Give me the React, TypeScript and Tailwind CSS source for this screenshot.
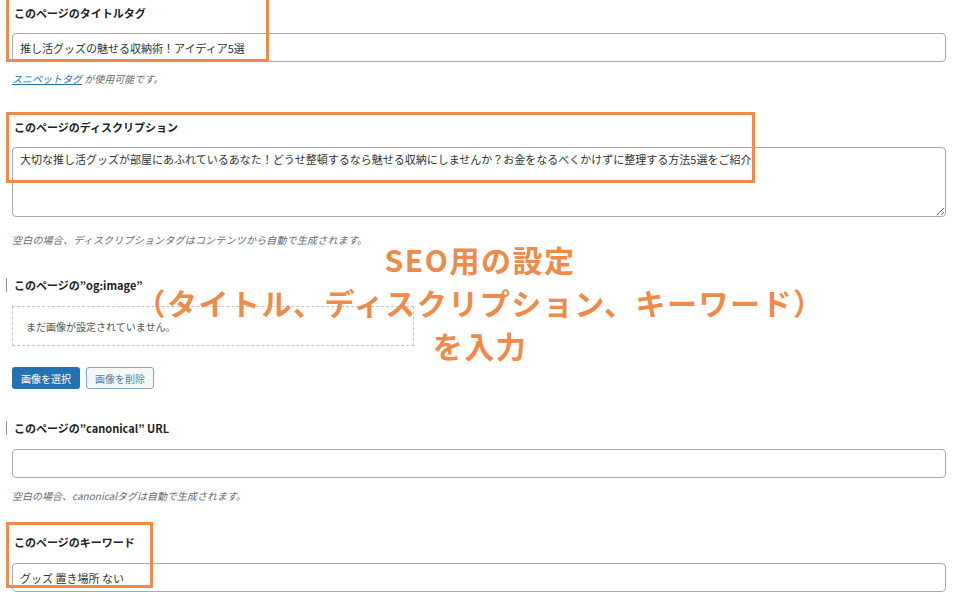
import React from "react";

const labelCls = "pl-[2px] text-[11px] leading-[14px] font-bold text-[#1d2327]";
const inputCls =
  "block w-full h-[29px] rounded-[4px] border border-[#a7aaad] bg-white px-[7px] text-[11px] text-[#2c3338] outline-none";
const helpCls = "text-[10px] leading-[14px] italic text-[#646970]";

const App: React.FC = () => {
  return (
    <div
      className="relative w-[960px] h-[594px] overflow-hidden bg-white"
      style={{ fontFamily: '"Noto Sans CJK JP", "Noto Sans", sans-serif' }}
    >
      <div className="flex flex-col pl-[12px] pr-[14px] pt-[6px]">
        {/* title tag */}
        <div className={labelCls}>このページのタイトルタグ</div>
        <input readOnly value="推し活グッズの魅せる収納術！アイディア5選" className={`${inputCls} mt-[13px]`} />
        <p className={`${helpCls} mt-[10px]`}>
          <span className="text-[#2271b1] underline">スニペットタグ</span> が使用可能です。
        </p>

        {/* description */}
        <div className={`${labelCls} mt-[34px]`}>このページのディスクリプション</div>
        <textarea
          readOnly
          value="大切な推し活グッズが部屋にあふれているあなた！どうせ整頓するなら魅せる収納にしませんか？お金をなるべくかけずに整理する方法5選をご紹介"
          className="mt-[13px] block w-full h-[70px] rounded-[4px] border border-[#a7aaad] bg-white px-[7px] pt-[3px] text-[11px] leading-[16px] text-[#2c3338] outline-none"
        />
        <p className={`${helpCls} mt-[16px] tracking-[0.2px]`}>空白の場合、ディスクリプションタグはコンテンツから自動で生成されます。</p>

        {/* og:image */}
        <div className="mt-[31px] -ml-[6px] flex items-center gap-[7px]">
          <span className="w-px h-[14px] bg-[#8c8f94]" />
          <span className="text-[11px] leading-[14px] font-bold text-[#1d2327]">このページの”og:image”</span>
        </div>
        <div className="mt-[14px] w-[402px] h-[40px] flex items-center border border-dashed border-[#c3c4c7] px-[13px] text-[10px] text-[#50575e]">
          まだ画像が設定されていません。
        </div>
        <div className="mt-[21px] flex gap-[6px]">
          <button className="w-[68px] h-[22px] rounded-[3px] bg-[#2271b1] text-[10px] text-white">画像を選択</button>
          <button className="w-[68px] h-[22px] rounded-[3px] border border-[#7fa5c9] bg-[#f6f7f7] text-[10px] text-[#5a7fa3]">
            画像を削除
          </button>
        </div>

        {/* canonical */}
        <div className="mt-[32px] -ml-[6px] flex items-center gap-[7px]">
          <span className="w-px h-[14px] bg-[#8c8f94]" />
          <span className="text-[11px] leading-[14px] font-bold text-[#1d2327]">このページの”canonical” URL</span>
        </div>
        <input readOnly value="" className={`${inputCls} mt-[14px]`} />
        <p className={`${helpCls} mt-[11px]`}>空白の場合、canonicalタグは自動で生成されます。</p>

        {/* keywords */}
        <div className={`${labelCls} mt-[32px]`}>このページのキーワード</div>
        <input readOnly value="グッズ 置き場所 ない" className={`${inputCls} mt-[14px]`} />
      </div>

      {/* annotation boxes */}
      <div className="absolute left-[6px] top-[-3px] w-[263px] h-[65px] border-[3px] border-[#ef8a48]" />
      <div className="absolute left-[6px] top-[112px] w-[749px] h-[71px] border-[3px] border-[#ef8a48]" />
      <div className="absolute left-[6px] top-[522px] w-[147px] h-[66px] border-[3px] border-[#ef8a48]" />

      {/* annotation text */}
      <div className="absolute left-0 right-0 top-[238px] text-center text-[30px] leading-[43px] font-bold tracking-[1.5px] text-[#ef8a48]">
        <div>SEO用の設定</div>
        <div>（タイトル、ディスクリプション、キーワード）</div>
        <div>を入力</div>
      </div>
    </div>
  );
};

export default App;
